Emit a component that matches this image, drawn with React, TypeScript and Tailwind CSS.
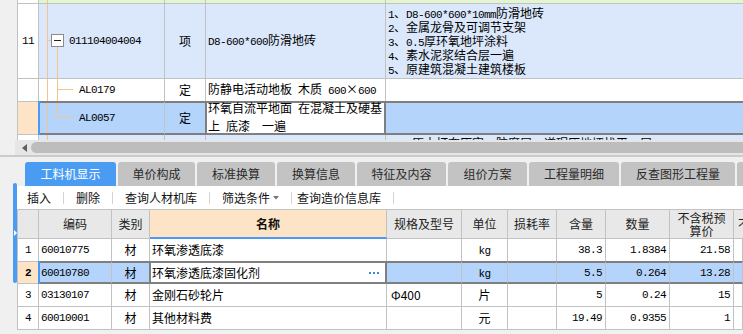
import React from "react";

const MONO = "font-['Liberation_Mono',monospace] text-[11px] tracking-[-0.6px]";

function Mix({ s }: { s: string }) {
  const parts = s.match(/[\x20-\x7e]+|[^\x20-\x7e]+/g) ?? [];
  return (
    <span className="whitespace-pre">
      {parts.map((p, i) =>
        /^[\x20-\x7e]+$/.test(p) ? (
          <span key={i} className={MONO}>
            {p}
          </span>
        ) : (
          <span key={i}>{p}</span>
        )
      )}
    </span>
  );
}

function TopGrid() {
  const desc = [
    "1、D8-600*600*10mm防滑地砖",
    "2、金属龙骨及可调节支架",
    "3、0.5厚环氧地坪涂料",
    "4、素水泥浆结合层一遍",
    "5、原建筑混凝土建筑楼板",
  ];
  return (
    <div className="flex h-[140px] shrink-0 overflow-hidden">
      <div className="w-[17px] shrink-0 bg-[#f0f0f0]" />
      <div className="flex min-w-0 flex-1 flex-col border-l border-l-[#c2c2c2] bg-white">
        {/* tail of previous row */}
        <div className="flex h-[4px] shrink-0">
          <div className="w-[21px] shrink-0 border-r border-b border-[#c2c2c2] bg-white" />
          <div className="relative w-[126px] shrink-0 border-r border-b border-[#c2c2c2] bg-[#e3f6d1]">
            <span className="absolute left-[8px] top-0 bottom-0 w-px bg-[#f5c48c]" />
          </div>
          <div className="w-[41px] shrink-0 border-r border-b border-[#c2c2c2] bg-[#e3f6d1]" />
          <div className="w-[180px] shrink-0 border-r border-b border-[#c2c2c2] bg-[#e3f6d1]" />
          <div className="min-w-0 flex-1 border-b border-[#c2c2c2] bg-[#e3f6d1]" />
        </div>

        {/* row 11 */}
        <div className="flex h-[75px] shrink-0">
          <div className="flex w-[21px] shrink-0 items-center justify-center border-r border-b border-[#c2c2c2] bg-white">
            <span className={MONO}>11</span>
          </div>
          <div className="relative flex w-[126px] shrink-0 items-center border-r border-b border-[#c2c2c2] bg-[#dbe8fc] pl-[30px]">
            <span className="absolute left-[8px] top-0 bottom-0 w-px bg-[#f5c48c]" />
            <span className="absolute left-[9px] top-[36px] h-px w-[3px] bg-[#f5c48c]" />
            <span className="absolute left-[12px] top-[30px] h-[13px] w-[13px] border border-[#8a8a8a] bg-white">
              <span className="absolute left-[2px] top-[5px] h-px w-[7px] bg-[#222]" />
            </span>
            <span className="absolute left-[18px] top-[43px] bottom-0 w-px bg-[#f5c48c]" />
            <span className={MONO}>011104004004</span>
          </div>
          <div className="flex w-[41px] shrink-0 items-center justify-center border-r border-b border-[#c2c2c2] bg-[#dbe8fc]">
            项
          </div>
          <div className="flex w-[180px] shrink-0 items-center whitespace-nowrap border-r border-b border-[#c2c2c2] bg-[#dbe8fc] pl-[2px]">
            <Mix s="D8-600*600防滑地砖" />
          </div>
          <div className="flex min-w-0 flex-1 flex-col justify-center whitespace-nowrap border-b border-[#c2c2c2] bg-[#dbe8fc] pl-[2px] leading-[14px]">
            {desc.map((d) => (
              <div key={d} className="h-[14px]">
                <Mix s={d} />
              </div>
            ))}
          </div>
        </div>

        {/* row AL0179 */}
        <div className="flex h-[22px] shrink-0">
          <div className="w-[21px] shrink-0 border-r border-[#c2c2c2] bg-white" />
          <div className="relative flex w-[126px] shrink-0 items-center border-r border-[#c2c2c2] bg-white pl-[40px]">
            <span className="absolute left-[8px] top-0 bottom-0 w-px bg-[#f5c48c]" />
            <span className="absolute left-[18px] top-0 bottom-0 w-px bg-[#f5c48c]" />
            <span className="absolute left-[19px] top-[10px] h-px w-[15px] bg-[#f5c48c]" />
            <span className={MONO}>AL0179</span>
          </div>
          <div className="flex w-[41px] shrink-0 items-center justify-center border-r border-[#c2c2c2]">
            定
          </div>
          <div className="flex w-[180px] shrink-0 items-center whitespace-nowrap border-r border-[#c2c2c2] pl-[2px]">
            <Mix s="防静电活动地板 木质 600×600" />
          </div>
          <div className="min-w-0 flex-1" />
        </div>

        {/* row AL0057 selected */}
        <div className="flex h-[34px] shrink-0">
          <div className="relative w-[21px] shrink-0 border-y border-r border-[#c2c2c2] bg-[#fde4c6]">
            <span className="absolute right-[-2px] top-[-1px] bottom-[-1px] z-10 w-[2px] bg-[#4a9cf3]" />
          </div>
          <div className="relative flex w-[126px] shrink-0 items-center border-y-2 border-y-[#7f7f7f] border-r border-r-[#c2c2c2] bg-[#b4d4fc] pl-[40px]">
            <span className="absolute left-[8px] top-0 bottom-0 w-px bg-[#f5c48c]" />
            <span className="absolute left-[18px] top-0 h-[14px] w-px bg-[#f5c48c]" />
            <span className="absolute left-[19px] top-[14px] h-px w-[15px] bg-[#f5c48c]" />
            <span className={MONO}>AL0057</span>
          </div>
          <div className="flex w-[41px] shrink-0 items-center justify-center border-y-2 border-y-[#7f7f7f] border-r border-r-[#7f7f7f] bg-[#b4d4fc]">
            定
          </div>
          <div className="flex w-[180px] shrink-0 flex-col justify-center whitespace-nowrap border-y-2 border-y-[#7f7f7f] border-l border-l-[#7f7f7f] border-r-2 border-r-[#7f7f7f] bg-white pl-[1px] leading-[16px]">
            <div>
              <Mix s="环氧自流平地面 在混凝土及硬基" />
            </div>
            <div>
              <Mix s="上 底漆　一遍" />
            </div>
          </div>
          <div className="min-w-0 flex-1 border-y-2 border-y-[#7f7f7f] bg-[#b4d4fc]" />
        </div>

        {/* partial next row */}
        <div className="flex h-[30px] shrink-0">
          <div className="w-[21px] shrink-0 border-r border-[#c2c2c2] bg-white" />
          <div className="relative w-[126px] shrink-0 border-r border-[#c2c2c2] bg-[#dbe8fc]">
            <span className="absolute left-[8px] top-0 bottom-0 w-px bg-[#f5c48c]" />
          </div>
          <div className="w-[41px] shrink-0 border-r border-[#c2c2c2] bg-[#dbe8fc]" />
          <div className="w-[180px] shrink-0 border-r border-[#c2c2c2] bg-[#dbe8fc]" />
          <div className="min-w-0 flex-1 whitespace-nowrap bg-[#dbe8fc] pl-[26px] pt-[1px]">
            原土打夯压实、防腐层一道碾压地坪找平一层
          </div>
        </div>
      </div>
    </div>
  );
}

function HScroll() {
  return (
    <div className="flex h-[15px] shrink-0">
      <div className="w-[15px] shrink-0 bg-[#f0f0f0]" />
      <div className="flex min-w-0 flex-1 items-start bg-[#e6e6e6] pt-[2px]">
        <svg width="5" height="8" viewBox="0 0 5 8" className="ml-[7px] mt-[2px] shrink-0">
          <path d="M5 0 L0 4 L5 8 Z" fill="#606060" />
        </svg>
        <div className="ml-[4px] h-[11px] flex-1 rounded-l-full bg-[#bdbdbd]" />
      </div>
    </div>
  );
}

const TABS: [string, string][] = [
  ["工料机显示", "w-[91px]"],
  ["单价构成", "w-[77px]"],
  ["标准换算", "w-[78px]"],
  ["换算信息", "w-[78px]"],
  ["特征及内容", "w-[89px]"],
  ["组价方案", "w-[79px]"],
  ["工程量明细", "w-[90px]"],
  ["反查图形工程量", "w-[114px]"],
  ["", "w-[80px]"],
];

function Tabs() {
  return (
    <div className="flex h-[24px] shrink-0 gap-[2px] overflow-hidden pl-[8px]">
      {TABS.map(([t, w], i) => (
        <div
          key={i}
          className={`flex shrink-0 items-center justify-center rounded-t-[3px] ${w} ${
            i === 0 ? "bg-[#4a9cf3] text-white" : "bg-[#c3c3c3] text-[#2a2a2a]"
          }`}
        >
          {t}
        </div>
      ))}
    </div>
  );
}

function Toolbar() {
  const sep = "h-[12px] w-px shrink-0 bg-[#d4d4d4]";
  return (
    <div className="flex h-[23px] shrink-0 items-center whitespace-nowrap bg-white pl-[10px] text-[#111]">
      <span>插入</span>
      <span className={`mx-[12px] ${sep}`} />
      <span>删除</span>
      <span className={`mx-[12px] ${sep}`} />
      <span>查询人材机库</span>
      <span className={`mx-[12px] ${sep}`} />
      <span>筛选条件</span>
      <svg width="6" height="4" viewBox="0 0 6 4" className="ml-[3px] shrink-0">
        <path d="M0 0 L6 0 L3 3.5 Z" fill="#777" />
      </svg>
      <span className={`ml-[12px] mr-[5px] ${sep}`} />
      <span>查询造价信息库</span>
      <span className={`ml-[12px] ${sep}`} />
    </div>
  );
}

type Row = {
  n: string;
  code: string;
  name: string;
  spec: string;
  unit: string;
  qty: string;
  amt: string;
  price: string;
  sel?: boolean;
  h: string;
  bb: boolean;
};

const ROWS: Row[] = [
  { n: "1", code: "60010775", name: "环氧渗透底漆", spec: "", unit: "kg", qty: "38.3", amt: "1.8384", price: "21.58", h: "h-[22px]", bb: false },
  { n: "2", code: "60010780", name: "环氧渗透底漆固化剂", spec: "", unit: "kg", qty: "5.5", amt: "0.264", price: "13.28", sel: true, h: "h-[23px]", bb: false },
  { n: "3", code: "03130107", name: "金刚石砂轮片", spec: "Φ400", unit: "片", qty: "5", amt: "0.24", price: "15", h: "h-[23px]", bb: true },
  { n: "4", code: "60010001", name: "其他材料费", spec: "", unit: "元", qty: "19.49", amt: "0.9355", price: "1", h: "h-[23px]", bb: true },
];

function DataRow({ r }: { r: Row }) {
  const sel = !!r.sel;
  const y = sel ? "border-y-2 border-y-[#7f7f7f]" : r.bb ? "border-b border-b-[#c2c2c2]" : "";
  const bg = sel ? "bg-[#b4d4fc]" : "bg-white";
  const c = `flex shrink-0 items-center overflow-hidden whitespace-nowrap border-r border-r-[#c2c2c2] ${y} ${bg}`;
  const cr = `flex shrink-0 items-center overflow-hidden whitespace-nowrap border-r ${
    sel ? "border-r-[#7f7f7f]" : "border-r-[#c2c2c2]"
  } ${y} ${bg}`;
  return (
    <div className={`flex shrink-0 ${r.h}`}>
      <div
        className={`relative flex w-[21px] shrink-0 items-center justify-center border-r border-r-[#c2c2c2] ${
          sel ? "border-y border-y-[#c2c2c2] bg-[#fde4c6] font-bold" : r.bb ? "border-b border-b-[#c2c2c2] bg-white" : "bg-white"
        }`}
      >
        <span className={MONO}>{r.n}</span>
        {sel && <span className="absolute right-[-2px] top-[-1px] bottom-[-1px] z-10 w-[2px] bg-[#4a9cf3]" />}
      </div>
      <div className={`${c} w-[73px] pl-[2px]`}>
        <span className={MONO}>{r.code}</span>
      </div>
      <div className={`${cr} w-[38px] justify-center`}>材</div>
      {sel ? (
        <div className="flex w-[237px] shrink-0 items-center overflow-hidden whitespace-nowrap border-y-2 border-y-[#7f7f7f] border-l border-l-[#7f7f7f] border-r-2 border-r-[#7f7f7f] bg-white pl-[1px]">
          <span>{r.name}</span>
          <span className="ml-auto mr-[6px] flex gap-[2px]">
            <span className="h-[2px] w-[2px] bg-[#3b87d9]" />
            <span className="h-[2px] w-[2px] bg-[#3b87d9]" />
            <span className="h-[2px] w-[2px] bg-[#3b87d9]" />
          </span>
        </div>
      ) : (
        <div className={`${c} w-[237px] pl-[2px]`}>{r.name}</div>
      )}
      <div className={`${c} w-[75px] pl-[4px]`}>{r.spec}</div>
      <div className={`${c} w-[46px] justify-center`}>
        <Mix s={r.unit} />
      </div>
      <div className={`${c} w-[49px]`} />
      <div className={`${c} w-[49px] justify-end pr-[3px]`}>
        <span className={MONO}>{r.qty}</span>
      </div>
      <div className={`${c} w-[64px] justify-end pr-[3px]`}>
        <span className={MONO}>{r.amt}</span>
      </div>
      <div className={`${c} w-[64px] justify-end pr-[3px]`}>
        <span className={MONO}>{r.price}</span>
      </div>
      <div className={`${c} min-w-0 flex-1`} />
    </div>
  );
}

function Table() {
  const h = "flex shrink-0 items-center justify-center whitespace-nowrap border-r border-b border-[#c2c2c2]";
  return (
    <div className="flex flex-col border-t border-l border-[#c2c2c2] bg-white">
      <div className="flex h-[29px] shrink-0 bg-[#e8e8e8] text-[#222]">
        <div className={`${h} w-[21px]`} />
        <div className={`${h} w-[73px]`}>编码</div>
        <div className={`${h} w-[38px]`}>类别</div>
        <div className="flex w-[237px] shrink-0 items-center justify-center border-r border-r-[#c2c2c2] border-b-2 border-b-[#4a9cf3] bg-[#fde4c6] font-bold text-[#111]">
          名称
        </div>
        <div className={`${h} w-[75px]`}>规格及型号</div>
        <div className={`${h} w-[46px]`}>单位</div>
        <div className={`${h} w-[49px]`}>损耗率</div>
        <div className={`${h} w-[49px]`}>含量</div>
        <div className={`${h} w-[64px]`}>数量</div>
        <div className={`${h} w-[64px] flex-col leading-[13px]`}>
          <span>不含税预</span>
          <span>算价</span>
        </div>
        <div className="flex min-w-0 flex-1 items-center overflow-hidden whitespace-nowrap border-b border-[#c2c2c2] pl-[4px]">
          不含税市场价
        </div>
      </div>
      {ROWS.map((r) => (
        <DataRow key={r.n} r={r} />
      ))}
    </div>
  );
}

function Lower() {
  return (
    <div className="flex min-h-0 flex-1">
      <div className="w-[17px] shrink-0">
        <div className="ml-[13px] mt-[26px] flex h-[100px] w-[4px] items-center rounded-[2px] bg-[#4a9cf3]">
          <svg width="3" height="6" viewBox="0 0 3 6" className="ml-px">
            <path d="M0 0 L3 3 L0 6 Z" fill="#fff" />
          </svg>
        </div>
      </div>
      <div className="flex min-w-0 flex-1 flex-col">
        <div className="h-[5px] shrink-0" />
        <Tabs />
        <Toolbar />
        <Table />
      </div>
    </div>
  );
}

export default function App() {
  return (
    <div className="flex h-[334px] w-[743px] flex-col overflow-hidden bg-[#f0f0f0] font-['Noto_Sans_CJK_SC',sans-serif] text-[12px] leading-[14px] text-black">
      <TopGrid />
      <HScroll />
      <div className="h-[2px] shrink-0 bg-[#cbcbcb]" />
      <Lower />
    </div>
  );
}
